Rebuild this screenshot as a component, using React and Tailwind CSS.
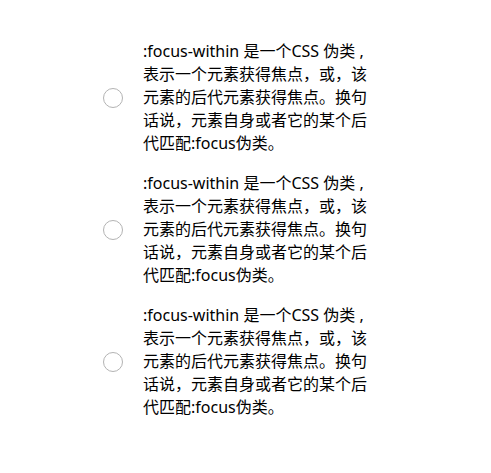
import React from 'react';

const TEXT = ':focus-within 是一个CSS 伪类 ,表示一个元素获得焦点，或，该元素的后代元素获得焦点。换句话说，元素自身或者它的某个后代匹配:focus伪类。';

const RadioItem = ({ name }) => (
  <label className="flex items-center gap-5">
    <span className="block w-5 h-5 shrink-0 rounded-full border border-[#b3b3b3] bg-white" />
    <input type="radio" name={name} className="hidden" />
    <span className="block w-[232px] text-[16px] leading-[23px] text-black">{TEXT}</span>
  </label>
);

const App = () => {
  return (
    <div
      className="w-full min-h-[473px] bg-white pt-[40px] pl-[103px] flex flex-col gap-[17px]"
      style={{ fontFamily: '"Noto Sans", "Noto Sans CJK SC", sans-serif' }}
    >
      <RadioItem name="a" />
      <RadioItem name="b" />
      <RadioItem name="c" />
    </div>
  );
};

export default App;
